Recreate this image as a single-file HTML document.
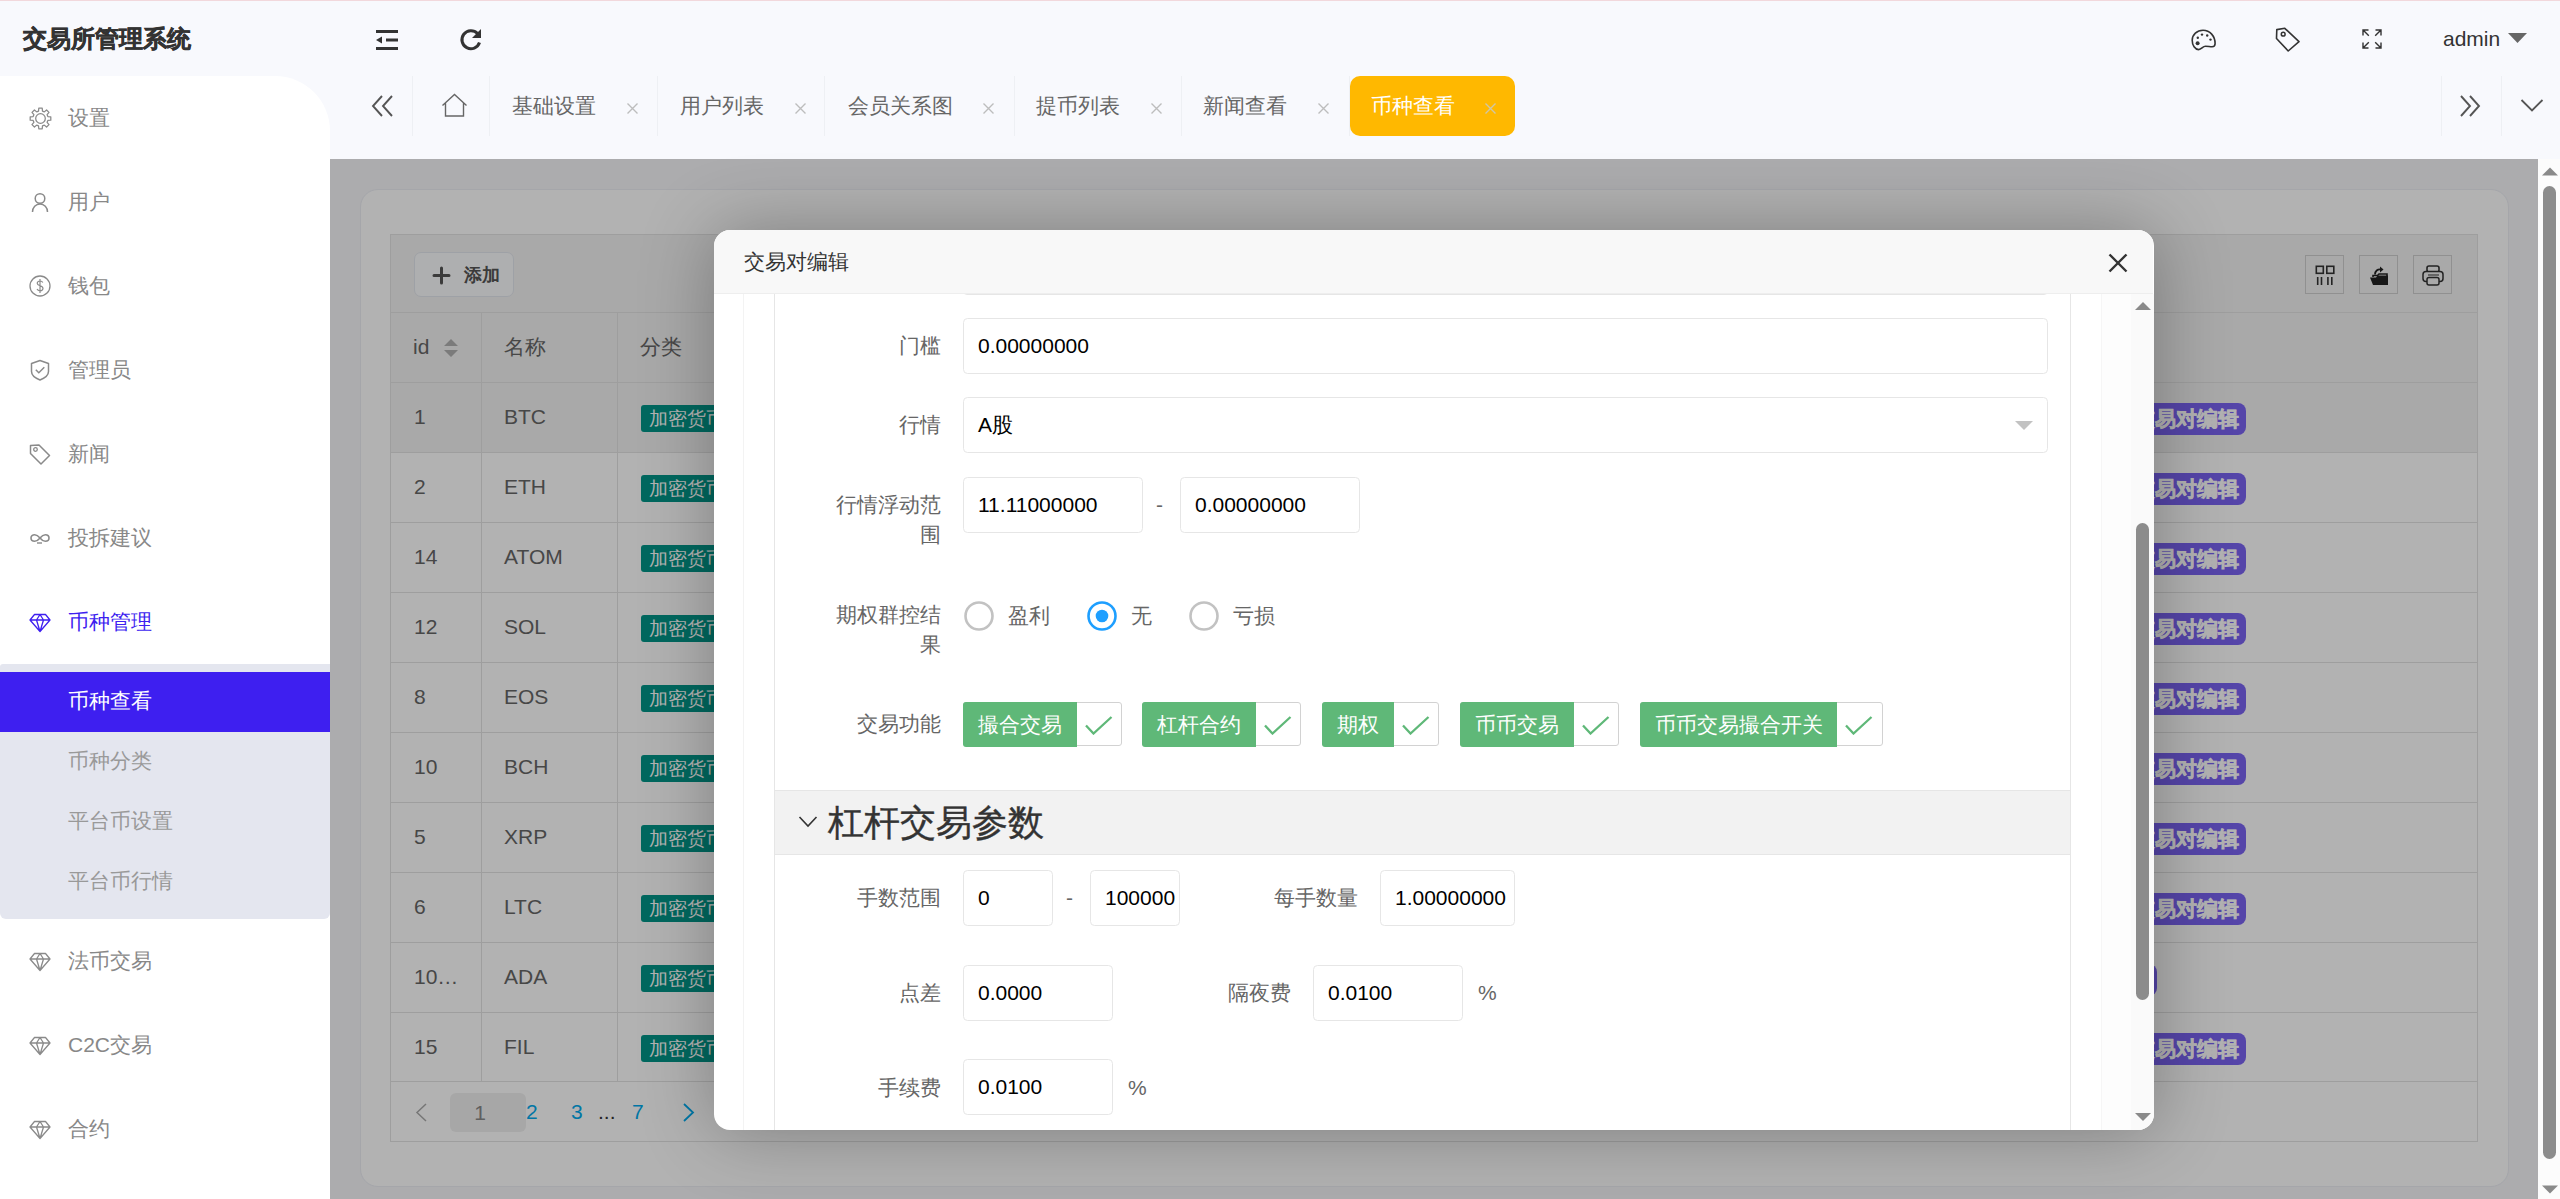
<!DOCTYPE html>
<html><head><meta charset="utf-8">
<style>
*{box-sizing:border-box;margin:0;padding:0}
html,body{width:2560px;height:1199px;overflow:hidden;white-space:nowrap;background:#fff;font-family:"Liberation Sans",sans-serif;color:#333}
.abs{position:absolute}
#topline{left:0;top:0;width:2560px;height:1px;background:#f2d8dc}
#header{left:0;top:1px;width:2560px;height:158px;background:#f8f9fd}
#logo{left:23px;top:22px;font-size:24px;font-weight:bold;color:#333;letter-spacing:0px;line-height:34px;-webkit-text-stroke:0.5px #333}
#side{left:0;top:76px;width:330px;height:1123px;background:#fff;border-top-right-radius:55px}
.mi{position:absolute;left:0;width:330px;height:30px;font-size:21px;line-height:30px;color:#888}
.mi .ic{position:absolute;left:29px;top:4px;width:22px;height:22px}
.mi .tx{position:absolute;left:68px;top:0}
#sub{left:0;top:664px;width:330px;height:255px;background:#e4e6ef;border-radius:3px 0 6px 6px}
#subact{left:0;top:672px;width:330px;height:60px;background:#3e1ff0}
.si{position:absolute;left:68px;font-size:21px;line-height:30px;color:#999}
#tabs{left:330px;top:76px;width:2230px;height:82px}
.tab{position:absolute;top:0;height:60px;font-size:21px;line-height:60px;color:#666}
.tsep{position:absolute;top:0;width:1px;height:60px;background:#eef0f4}
.tx-x{position:absolute;top:0;font-size:22px;color:#c2c2c2}
#content{left:330px;top:159px;width:2208px;height:1040px;background:#f6f6f9;overflow:hidden}
#card{left:30px;top:30px;width:2149px;height:998px;background:#fff;border-radius:18px;border:1px solid #eceef4}
#mask{left:330px;top:159px;width:2208px;height:1040px;background:rgba(0,0,0,0.3)}
#vscroll{left:2538px;top:159px;width:22px;height:1040px;background:#fcfcfc}
#modal{left:714px;top:230px;width:1440px;height:900px;background:#fff;border-radius:16px;overflow:hidden;box-shadow:1px 1px 75px rgba(0,0,0,0.3)}
#mhead{left:0;top:0;width:1439px;height:64px;background:#f8f8f8;border-bottom:1px solid #eee}
#mtitle{left:30px;top:17px;font-size:21px;line-height:30px;color:#333}
.lbl{position:absolute;font-size:21px;line-height:30px;color:#666;text-align:right}
.inp{position:absolute;height:56px;border:1px solid #e6e6e6;border-radius:4.5px;background:#fff;font-size:21px;line-height:54px;padding-left:14px;color:#000}
</style></head><body>
<div id="topline" class="abs"></div>
<div id="header" class="abs"></div>
<div id="logo" class="abs">交易所管理系统</div>

<!-- header icons -->
<svg class="abs" style="left:374px;top:28px" width="26" height="24" viewBox="0 0 26 24">
 <rect x="2" y="2" width="22" height="3" fill="#333"/>
 <rect x="12" y="10.5" width="12" height="3" fill="#333"/>
 <rect x="2" y="19" width="22" height="3" fill="#333"/>
 <path d="M2 12 L8 8.5 L8 15.5 Z" fill="#333"/>
</svg>
<svg class="abs" style="left:458px;top:27px" width="26" height="26" viewBox="0 0 26 26">
 <path d="M21.5 15.5 A9 9 0 1 1 19.5 6.5" fill="none" stroke="#333" stroke-width="3"/>
 <path d="M23 2 L23 11 L14 11 Z" fill="#333"/>
</svg>

<div id="side" class="abs"></div>
<div id="sub" class="abs"></div>
<div id="subact" class="abs"></div>


<div class="abs" style="left:0;top:0">
 <!-- 设置 -->
 <div class="mi" style="top:103px"><svg class="ic" style="left:29px;top:4px;width:23px;height:23px" viewBox="0 0 22 22"><path d="M9.11 3.95L9.35 1.14L12.65 1.14L12.89 3.95L14.65 4.68L16.81 2.86L19.14 5.19L17.32 7.35L18.05 9.11L20.86 9.35L20.86 12.65L18.05 12.89L17.32 14.65L19.14 16.81L16.81 19.14L14.65 17.32L12.89 18.05L12.65 20.86L9.35 20.86L9.11 18.05L7.35 17.32L5.19 19.14L2.86 16.81L4.68 14.65L3.95 12.89L1.14 12.65L1.14 9.35L3.95 9.11L4.68 7.35L2.86 5.19L5.19 2.86L7.35 4.68Z" fill="none" stroke="#8a8a8a" stroke-width="1.2" stroke-linejoin="round"/><circle cx="11" cy="11" r="4.6" fill="none" stroke="#8a8a8a" stroke-width="1.2"/></svg><span class="tx">设置</span></div>
 <div class="mi" style="top:187px"><svg class="ic" viewBox="0 0 22 22"><circle cx="11" cy="7.5" r="4.8" fill="none" stroke="#8a8a8a" stroke-width="1.5"/><path d="M3.5 21c0-4.5 3.3-8 7.5-8s7.5 3.5 7.5 8" fill="none" stroke="#8a8a8a" stroke-width="1.5"/></svg><span class="tx">用户</span></div>
 <div class="mi" style="top:271px"><svg class="ic" viewBox="0 0 22 22"><circle cx="11" cy="11" r="10" fill="none" stroke="#8a8a8a" stroke-width="1.3"/><path d="M13.8 7.6c-.5-1-1.6-1.6-2.8-1.6-1.6 0-2.8.9-2.8 2.3 0 3 5.8 1.8 5.8 5 0 1.4-1.3 2.5-3 2.5-1.3 0-2.5-.7-3-1.8M11 4v14" fill="none" stroke="#8a8a8a" stroke-width="1.2"/></svg><span class="tx">钱包</span></div>
 <div class="mi" style="top:355px"><svg class="ic" viewBox="0 0 22 22"><path d="M11 1.5l8.5 3v8c0 3.5-3.5 6.5-8.5 8.5-5-2-8.5-5-8.5-8.5v-8z" fill="none" stroke="#8a8a8a" stroke-width="1.5" stroke-linejoin="round"/><path d="M6.8 10.8l3 3 5.5-5.5" fill="none" stroke="#8a8a8a" stroke-width="1.5"/></svg><span class="tx">管理员</span></div>
 <div class="mi" style="top:439px"><svg class="ic" viewBox="0 0 22 22"><path d="M1.5 2.5l8.5-.5 10.5 10.5-8.5 8.5L1.5 10.5z" fill="none" stroke="#8a8a8a" stroke-width="1.5" stroke-linejoin="round"/><circle cx="6.5" cy="6.5" r="1.8" fill="none" stroke="#8a8a8a" stroke-width="1.3"/></svg><span class="tx">新闻</span></div>
 <div class="mi" style="top:523px"><svg class="ic" viewBox="0 0 22 22"><path d="M11 11c-2-2.5-3.5-3.3-5.3-3.3C3.6 7.7 2 9.1 2 11s1.6 3.3 3.7 3.3c1.8 0 3.3-.8 5.3-3.3 2-2.5 3.5-3.3 5.3-3.3 2.1 0 3.7 1.4 3.7 3.3s-1.6 3.3-3.7 3.3c-1.8 0-3.3-.8-5.3-3.3z" fill="none" stroke="#8a8a8a" stroke-width="1.6"/><path d="M8 16h5" stroke="#8a8a8a" stroke-width="1.4"/></svg><span class="tx">投拆建议</span></div>
 <div class="mi" style="top:607px;color:#3e1ff0"><svg class="ic" viewBox="0 0 22 22"><path d="M5.5 3.5h11l4.5 5.5L11 20.5 1 9z M1 9h20 M7.5 9L11 20.5 14.5 9 M7.5 9L11 3.5 14.5 9" fill="none" stroke="#3e1ff0" stroke-width="1.3" stroke-linejoin="round"/></svg><span class="tx">币种管理</span></div>
 <div class="si" style="top:686px;color:#fff">币种查看</div>
 <div class="si" style="top:746px">币种分类</div>
 <div class="si" style="top:806px">平台币设置</div>
 <div class="si" style="top:866px">平台币行情</div>
 <div class="mi" style="top:946px"><svg class="ic" viewBox="0 0 22 22"><path d="M5.5 3.5h11l4.5 5.5L11 20.5 1 9z M1 9h20 M7.5 9L11 20.5 14.5 9 M7.5 9L11 3.5 14.5 9" fill="none" stroke="#8a8a8a" stroke-width="1.3" stroke-linejoin="round"/></svg><span class="tx">法币交易</span></div>
 <div class="mi" style="top:1030px"><svg class="ic" viewBox="0 0 22 22"><path d="M5.5 3.5h11l4.5 5.5L11 20.5 1 9z M1 9h20 M7.5 9L11 20.5 14.5 9 M7.5 9L11 3.5 14.5 9" fill="none" stroke="#8a8a8a" stroke-width="1.3" stroke-linejoin="round"/></svg><span class="tx">C2C交易</span></div>
 <div class="mi" style="top:1114px"><svg class="ic" viewBox="0 0 22 22"><path d="M5.5 3.5h11l4.5 5.5L11 20.5 1 9z M1 9h20 M7.5 9L11 20.5 14.5 9 M7.5 9L11 3.5 14.5 9" fill="none" stroke="#8a8a8a" stroke-width="1.3" stroke-linejoin="round"/></svg><span class="tx">合约</span></div>
</div>

<div class="abs" style="left:0;top:0">
 <div class="tsep" style="left:412px;top:76px"></div>
 <div class="tsep" style="left:489px;top:76px"></div>
 <div class="tsep" style="left:657px;top:76px"></div>
 <div class="tsep" style="left:824px;top:76px"></div>
 <div class="tsep" style="left:1014px;top:76px"></div>
 <div class="tsep" style="left:1181px;top:76px"></div>
 <div class="tsep" style="left:1349px;top:76px"></div>
 <div class="tsep" style="left:2441px;top:76px"></div>
 <div class="tsep" style="left:2501px;top:76px"></div>
 <svg class="abs" style="left:370px;top:94px" width="26" height="24" viewBox="0 0 26 24"><path d="M12 2 L3 12 L12 22 M22 2 L13 12 L22 22" fill="none" stroke="#555" stroke-width="1.9"/></svg>
 <svg class="abs" style="left:441px;top:93px" width="27" height="25" viewBox="0 0 27 25"><path d="M1.5 12.5 L13.5 1.5 L25.5 12.5 M4.5 10 V23 H22.5 V10" fill="none" stroke="#666" stroke-width="1.4"/></svg>
 <div class="tab" style="left:512px;top:76px">基础设置</div><svg class="abs" style="left:627px;top:103px" width="11" height="11" viewBox="0 0 11 11"><path d="M0.5 0.5L10.5 10.5M10.5 0.5L0.5 10.5" stroke="#bdbdbd" stroke-width="1.4"/></svg>
 <div class="tab" style="left:680px;top:76px">用户列表</div><svg class="abs" style="left:795px;top:103px" width="11" height="11" viewBox="0 0 11 11"><path d="M0.5 0.5L10.5 10.5M10.5 0.5L0.5 10.5" stroke="#bdbdbd" stroke-width="1.4"/></svg>
 <div class="tab" style="left:848px;top:76px">会员关系图</div><svg class="abs" style="left:983px;top:103px" width="11" height="11" viewBox="0 0 11 11"><path d="M0.5 0.5L10.5 10.5M10.5 0.5L0.5 10.5" stroke="#bdbdbd" stroke-width="1.4"/></svg>
 <div class="tab" style="left:1036px;top:76px">提币列表</div><svg class="abs" style="left:1151px;top:103px" width="11" height="11" viewBox="0 0 11 11"><path d="M0.5 0.5L10.5 10.5M10.5 0.5L0.5 10.5" stroke="#bdbdbd" stroke-width="1.4"/></svg>
 <div class="tab" style="left:1203px;top:76px">新闻查看</div><svg class="abs" style="left:1318px;top:103px" width="11" height="11" viewBox="0 0 11 11"><path d="M0.5 0.5L10.5 10.5M10.5 0.5L0.5 10.5" stroke="#bdbdbd" stroke-width="1.4"/></svg>
 <div class="abs" style="left:1350px;top:76px;width:165px;height:60px;background:#ffb800;border-radius:10px"></div>
 <div class="tab" style="left:1371px;top:76px;color:#fff">币种查看</div><svg class="abs" style="left:1485px;top:103px" width="11" height="11" viewBox="0 0 11 11"><path d="M0.5 0.5L10.5 10.5M10.5 0.5L0.5 10.5" stroke="#cfc6a8" stroke-width="1.4"/></svg>
 <svg class="abs" style="left:2459px;top:94px" width="25" height="24" viewBox="0 0 25 24"><path d="M2 2 L11 12 L2 22 M11 2 L20 12 L11 22" fill="none" stroke="#555" stroke-width="1.9"/></svg>
 <svg class="abs" style="left:2520px;top:98px" width="24" height="15" viewBox="0 0 24 15"><path d="M1.5 2 L12 12.5 L22.5 2" fill="none" stroke="#555" stroke-width="1.8"/></svg>
</div>
<!-- right header -->
<svg class="abs" style="left:2191px;top:29px" width="26" height="22" viewBox="0 0 26 22"><path d="M12 1.2C6 1.2 1.2 5.5 1.2 11.2c0 5 2.8 9.4 6.5 9.4 2.8 0 3.9-3.3 6.8-3.3 3.3 0 3.8.5 6.6.5 1.9 0 3-1.4 3-3.3C24.1 7.2 19 1.2 12 1.2z" fill="none" stroke="#333" stroke-width="1.6"/><circle cx="6.6" cy="14.3" r="2" fill="#333"/><circle cx="6.8" cy="8.8" r="1.2" fill="#333"/><circle cx="11" cy="5.6" r="1.2" fill="#333"/><circle cx="16.2" cy="6.5" r="1.2" fill="#333"/><circle cx="19.5" cy="10.6" r="1.2" fill="#333"/></svg>
<svg class="abs" style="left:2275px;top:27px" width="26" height="25" viewBox="0 0 26 25"><path d="M1.8 2.6 L9.8 1.3 L24 14.6 L13.2 24 L1.5 11.5 Z" fill="none" stroke="#333" stroke-width="1.6" stroke-linejoin="round"/><circle cx="8.2" cy="7.2" r="1.9" fill="none" stroke="#333" stroke-width="1.5"/></svg>
<svg class="abs" style="left:2362px;top:29px" width="20" height="20" viewBox="0 0 20 20"><path d="M1 6.5V1H6.5M1 1L6.8 6.8M13.5 1H19V6.5M19 1L13.2 6.8M1 13.5V19H6.5M1 19L6.8 13.2M19 13.5V19H13.5M19 19L13.2 13.2" fill="none" stroke="#333" stroke-width="1.4"/></svg>
<div class="abs" style="left:2443px;top:24px;font-size:21px;line-height:30px;color:#333">admin</div>
<svg class="abs" style="left:2508px;top:33px" width="19" height="11" viewBox="0 0 19 11"><path d="M0 0H19L9.5 10Z" fill="#666"/></svg>

<div id="content" class="abs">
 <div id="card" class="abs"></div>
<div class="abs" style="left:60px;top:75px;width:2088px;height:908px;border:1px solid #e2e2e2;background:#fff"></div>
<div class="abs" style="left:61px;top:76px;width:2086px;height:78px;background:#f2f2f2;border-bottom:1px solid #e2e2e2"></div>
<div class="abs" style="left:61px;top:154px;width:2086px;height:70px;background:#f2f2f2;border-bottom:1px solid #e2e2e2"></div>
<div class="abs" style="left:61px;top:224px;width:2086px;height:69px;background:#f2f2f2"></div>
<div class="abs" style="left:61px;top:293px;width:2086px;height:1px;background:#e2e2e2"></div>
<div class="abs" style="left:61px;top:363px;width:2086px;height:1px;background:#e2e2e2"></div>
<div class="abs" style="left:61px;top:433px;width:2086px;height:1px;background:#e2e2e2"></div>
<div class="abs" style="left:61px;top:503px;width:2086px;height:1px;background:#e2e2e2"></div>
<div class="abs" style="left:61px;top:573px;width:2086px;height:1px;background:#e2e2e2"></div>
<div class="abs" style="left:61px;top:643px;width:2086px;height:1px;background:#e2e2e2"></div>
<div class="abs" style="left:61px;top:713px;width:2086px;height:1px;background:#e2e2e2"></div>
<div class="abs" style="left:61px;top:783px;width:2086px;height:1px;background:#e2e2e2"></div>
<div class="abs" style="left:61px;top:853px;width:2086px;height:1px;background:#e2e2e2"></div>
<div class="abs" style="left:61px;top:922px;width:2086px;height:1px;background:#e2e2e2"></div>
<div class="abs" style="left:151px;top:153px;width:1px;height:770px;background:#e2e2e2"></div>
<div class="abs" style="left:287px;top:153px;width:1px;height:770px;background:#e2e2e2"></div>
<div class="abs" style="left:83px;top:173px;font-size:21px;line-height:30px;color:#666">id</div>
<svg class="abs" style="left:113px;top:179px" width="16" height="20" viewBox="0 0 16 20"><path d="M8 1L15 8H1Z M8 19L15 12H1Z" fill="#b0b0b0"/></svg>
<div class="abs" style="left:174px;top:173px;font-size:21px;line-height:30px;color:#666">名称</div>
<div class="abs" style="left:310px;top:173px;font-size:21px;line-height:30px;color:#666">分类</div>
<div class="abs" style="left:84px;top:243px;font-size:21px;line-height:30px;color:#666">1</div>
<div class="abs" style="left:174px;top:243px;font-size:21px;line-height:30px;color:#666">BTC</div>
<div class="abs" style="left:311px;top:246px;height:27px;padding:0 8px;background:#009688;color:#fff;border-radius:3px;font-size:19px;line-height:27px">加密货币</div>
<div class="abs" style="left:1780px;top:244px;width:136px;height:32px;background:#7a64f2;border-radius:8px;color:#fff;font-weight:bold;font-size:21px;line-height:32px;text-align:right;padding-right:7px;-webkit-text-stroke:0.5px #fff">交易对编辑</div>
<div class="abs" style="left:84px;top:313px;font-size:21px;line-height:30px;color:#666">2</div>
<div class="abs" style="left:174px;top:313px;font-size:21px;line-height:30px;color:#666">ETH</div>
<div class="abs" style="left:311px;top:316px;height:27px;padding:0 8px;background:#009688;color:#fff;border-radius:3px;font-size:19px;line-height:27px">加密货币</div>
<div class="abs" style="left:1780px;top:314px;width:136px;height:32px;background:#7a64f2;border-radius:8px;color:#fff;font-weight:bold;font-size:21px;line-height:32px;text-align:right;padding-right:7px;-webkit-text-stroke:0.5px #fff">交易对编辑</div>
<div class="abs" style="left:84px;top:383px;font-size:21px;line-height:30px;color:#666">14</div>
<div class="abs" style="left:174px;top:383px;font-size:21px;line-height:30px;color:#666">ATOM</div>
<div class="abs" style="left:311px;top:386px;height:27px;padding:0 8px;background:#009688;color:#fff;border-radius:3px;font-size:19px;line-height:27px">加密货币</div>
<div class="abs" style="left:1780px;top:384px;width:136px;height:32px;background:#7a64f2;border-radius:8px;color:#fff;font-weight:bold;font-size:21px;line-height:32px;text-align:right;padding-right:7px;-webkit-text-stroke:0.5px #fff">交易对编辑</div>
<div class="abs" style="left:84px;top:453px;font-size:21px;line-height:30px;color:#666">12</div>
<div class="abs" style="left:174px;top:453px;font-size:21px;line-height:30px;color:#666">SOL</div>
<div class="abs" style="left:311px;top:456px;height:27px;padding:0 8px;background:#009688;color:#fff;border-radius:3px;font-size:19px;line-height:27px">加密货币</div>
<div class="abs" style="left:1780px;top:454px;width:136px;height:32px;background:#7a64f2;border-radius:8px;color:#fff;font-weight:bold;font-size:21px;line-height:32px;text-align:right;padding-right:7px;-webkit-text-stroke:0.5px #fff">交易对编辑</div>
<div class="abs" style="left:84px;top:523px;font-size:21px;line-height:30px;color:#666">8</div>
<div class="abs" style="left:174px;top:523px;font-size:21px;line-height:30px;color:#666">EOS</div>
<div class="abs" style="left:311px;top:526px;height:27px;padding:0 8px;background:#009688;color:#fff;border-radius:3px;font-size:19px;line-height:27px">加密货币</div>
<div class="abs" style="left:1780px;top:524px;width:136px;height:32px;background:#7a64f2;border-radius:8px;color:#fff;font-weight:bold;font-size:21px;line-height:32px;text-align:right;padding-right:7px;-webkit-text-stroke:0.5px #fff">交易对编辑</div>
<div class="abs" style="left:84px;top:593px;font-size:21px;line-height:30px;color:#666">10</div>
<div class="abs" style="left:174px;top:593px;font-size:21px;line-height:30px;color:#666">BCH</div>
<div class="abs" style="left:311px;top:596px;height:27px;padding:0 8px;background:#009688;color:#fff;border-radius:3px;font-size:19px;line-height:27px">加密货币</div>
<div class="abs" style="left:1780px;top:594px;width:136px;height:32px;background:#7a64f2;border-radius:8px;color:#fff;font-weight:bold;font-size:21px;line-height:32px;text-align:right;padding-right:7px;-webkit-text-stroke:0.5px #fff">交易对编辑</div>
<div class="abs" style="left:84px;top:663px;font-size:21px;line-height:30px;color:#666">5</div>
<div class="abs" style="left:174px;top:663px;font-size:21px;line-height:30px;color:#666">XRP</div>
<div class="abs" style="left:311px;top:666px;height:27px;padding:0 8px;background:#009688;color:#fff;border-radius:3px;font-size:19px;line-height:27px">加密货币</div>
<div class="abs" style="left:1780px;top:664px;width:136px;height:32px;background:#7a64f2;border-radius:8px;color:#fff;font-weight:bold;font-size:21px;line-height:32px;text-align:right;padding-right:7px;-webkit-text-stroke:0.5px #fff">交易对编辑</div>
<div class="abs" style="left:84px;top:733px;font-size:21px;line-height:30px;color:#666">6</div>
<div class="abs" style="left:174px;top:733px;font-size:21px;line-height:30px;color:#666">LTC</div>
<div class="abs" style="left:311px;top:736px;height:27px;padding:0 8px;background:#009688;color:#fff;border-radius:3px;font-size:19px;line-height:27px">加密货币</div>
<div class="abs" style="left:1780px;top:734px;width:136px;height:32px;background:#7a64f2;border-radius:8px;color:#fff;font-weight:bold;font-size:21px;line-height:32px;text-align:right;padding-right:7px;-webkit-text-stroke:0.5px #fff">交易对编辑</div>
<div class="abs" style="left:84px;top:803px;font-size:21px;line-height:30px;color:#666">10…</div>
<div class="abs" style="left:174px;top:803px;font-size:21px;line-height:30px;color:#666">ADA</div>
<div class="abs" style="left:311px;top:806px;height:27px;padding:0 8px;background:#009688;color:#fff;border-radius:3px;font-size:19px;line-height:27px">加密货币</div>
<div class="abs" style="left:1790px;top:803px;width:37px;height:32px;background:#7a64f2;border-radius:8px;margin-top:2px"></div>
<div class="abs" style="left:84px;top:873px;font-size:21px;line-height:30px;color:#666">15</div>
<div class="abs" style="left:174px;top:873px;font-size:21px;line-height:30px;color:#666">FIL</div>
<div class="abs" style="left:311px;top:876px;height:27px;padding:0 8px;background:#009688;color:#fff;border-radius:3px;font-size:19px;line-height:27px">加密货币</div>
<div class="abs" style="left:1780px;top:874px;width:136px;height:32px;background:#7a64f2;border-radius:8px;color:#fff;font-weight:bold;font-size:21px;line-height:32px;text-align:right;padding-right:7px;-webkit-text-stroke:0.5px #fff">交易对编辑</div>
<div class="abs" style="left:84px;top:93px;width:100px;height:45px;background:#fafbfc;border:1px solid #e3e7ee;border-radius:7px"></div>
<svg class="abs" style="left:102px;top:107px" width="19" height="19" viewBox="0 0 19 19"><path d="M9.5 2V17M2 9.5H17" stroke="#555" stroke-width="3" stroke-linecap="round"/></svg>
<div class="abs" style="left:134px;top:101px;font-size:18px;font-weight:bold;line-height:30px;color:#555">添加</div>
<div class="abs" style="left:1975px;top:96px;width:39px;height:39px;border:1px solid #cfcfcf"></div>
<div class="abs" style="left:2029px;top:96px;width:39px;height:39px;border:1px solid #cfcfcf"></div>
<div class="abs" style="left:2083px;top:96px;width:39px;height:39px;border:1px solid #cfcfcf"></div>
<svg class="abs" style="left:1985px;top:106px" width="21" height="21" viewBox="0 0 21 21"><rect x="1.3" y="1.3" width="7" height="7" fill="none" stroke="#333" stroke-width="1.6"/><rect x="11.8" y="1.3" width="7" height="7" fill="none" stroke="#333" stroke-width="1.6"/><path d="M2.7 12V20M6.5 12V20M12.9 12V20M16.8 12V20" stroke="#333" stroke-width="1.6"/></svg>
<svg class="abs" style="left:2039px;top:106px" width="21" height="21" viewBox="0 0 21 21"><path d="M1 12.5h6l1.5-2H19v9.5H4z" fill="#222"/><path d="M4 12V10.5H8.5L10 9H18V12" fill="none" stroke="#222" stroke-width="1.6"/><path d="M6 9.5C6 6 8.5 4 12 4.5" fill="none" stroke="#222" stroke-width="1.8"/><path d="M11 1.5L14.5 4.5L11 7.5Z" fill="#222"/></svg>
<svg class="abs" style="left:2092px;top:106px" width="22" height="21" viewBox="0 0 22 21"><rect x="5" y="1" width="12" height="6" rx="2" fill="none" stroke="#333" stroke-width="1.6"/><rect x="1" y="6.5" width="20" height="10" rx="3" fill="#f2f2f2" stroke="#333" stroke-width="1.5"/><rect x="5" y="12.5" width="12" height="7.5" rx="2" fill="#f2f2f2" stroke="#333" stroke-width="1.5"/><path d="M6 10H17" stroke="#333" stroke-width="1"/></svg>
<svg class="abs" style="left:85px;top:944px" width="12" height="19" viewBox="0 0 12 19"><path d="M11 1L2 9.5L11 18" fill="none" stroke="#aaa" stroke-width="1.5"/></svg>
<div class="abs" style="left:120px;top:934px;width:76px;height:39px;background:#f0f0f0;border-radius:6px;text-align:center;padding-right:16px;font-size:21px;line-height:39px;color:#888">1</div>
<div class="abs" style="left:196px;top:938px;font-size:21px;line-height:30px;color:#01aaed">2</div>
<div class="abs" style="left:241px;top:938px;font-size:21px;line-height:30px;color:#01aaed">3</div>
<div class="abs" style="left:302px;top:938px;font-size:21px;line-height:30px;color:#01aaed">7</div>
<div class="abs" style="left:268px;top:938px;font-size:21px;line-height:30px;color:#333">...</div>
<svg class="abs" style="left:353px;top:944px" width="12" height="19" viewBox="0 0 12 19"><path d="M1 1L10 9.5L1 18" fill="none" stroke="#01aaed" stroke-width="1.8"/></svg>
</div>
<div id="mask" class="abs"></div>
<div id="vscroll" class="abs"></div>
<svg class="abs" style="left:2542px;top:167px" width="16" height="9" viewBox="0 0 16 9"><path d="M0 8.5H16L8 0.5Z" fill="#8a8a8a"/></svg>
<div class="abs" style="left:2543px;top:186px;width:13px;height:973px;background:#8c8c8c;border-radius:6.5px"></div>
<svg class="abs" style="left:2542px;top:1185px" width="16" height="9" viewBox="0 0 16 9"><path d="M0 0.5H16L8 8.5Z" fill="#8a8a8a"/></svg>

<div id="modal" class="abs">
<div class="abs" style="left:1387px;top:64px;width:30px;height:836px;background:#fdfdfd"></div>
<div class="abs" style="left:1417px;top:64px;width:23px;height:836px;background:#fafafa"></div>
<div class="abs" style="left:29px;top:64px;width:1px;height:836px;background:#f3f3f3"></div>
<div class="abs" style="left:60px;top:64px;width:1px;height:836px;background:#e6e6e6"></div>
<div class="abs" style="left:1356px;top:64px;width:1px;height:836px;background:#e6e6e6"></div>
<div class="abs" style="left:1387px;top:64px;width:1px;height:836px;background:#f6f6f6"></div>
<div class="abs" style="left:249px;top:8px;width:1085px;height:57px;border:1px solid #e6e6e6;border-radius:4px"></div>
<div class="lbl" style="right:1213px;top:101px">门槛</div>
<div class="inp" style="left:249px;top:88px;width:1085px;">0.00000000</div>
<div class="lbl" style="right:1213px;top:180px">行情</div>
<div class="inp" style="left:249px;top:167px;width:1085px;">A股</div>
<svg class="abs" style="left:1301px;top:191px" width="18" height="10" viewBox="0 0 18 10"><path d="M0 0H18L9 9Z" fill="#c2c2c2"/></svg>
<div class="lbl" style="right:1213px;top:260px;width:110px;white-space:normal;line-height:30px">行情浮动范围</div>
<div class="inp" style="left:249px;top:247px;width:180px;">11.11000000</div>
<div class="abs" style="left:442px;top:260px;font-size:21px;line-height:30px;color:#666">-</div>
<div class="inp" style="left:466px;top:247px;width:180px;">0.00000000</div>
<div class="lbl" style="right:1213px;top:370px;width:110px;white-space:normal;line-height:30px">期权群控结果</div>
<svg class="abs" style="left:250px;top:371px" width="30" height="30" viewBox="0 0 30 30"><circle cx="15" cy="15" r="13.5" fill="#fff" stroke="#c2c2c2" stroke-width="2.6"/></svg>
<div class="abs" style="left:294px;top:371px;font-size:21px;line-height:30px;color:#666">盈利</div>
<svg class="abs" style="left:373px;top:371px" width="30" height="30" viewBox="0 0 30 30"><circle cx="15" cy="15" r="13.5" fill="#fff" stroke="#1e9fff" stroke-width="2.6"/><circle cx="15" cy="15" r="6.3" fill="#1e9fff"/></svg>
<div class="abs" style="left:417px;top:371px;font-size:21px;line-height:30px;color:#666">无</div>
<svg class="abs" style="left:475px;top:371px" width="30" height="30" viewBox="0 0 30 30"><circle cx="15" cy="15" r="13.5" fill="#fff" stroke="#c2c2c2" stroke-width="2.6"/></svg>
<div class="abs" style="left:519px;top:371px;font-size:21px;line-height:30px;color:#666">亏损</div>
<div class="lbl" style="right:1213px;top:479px">交易功能</div>
<div class="abs" style="left:249px;top:472px;width:159px;height:44px;border:1px solid #d2d2d2;border-radius:3px;background:#fff"></div>
<div class="abs" style="left:249px;top:472px;width:114px;height:45px;background:#5fb878;border-radius:3px 0 0 3px;color:#fff;font-size:21px;line-height:45px;text-align:center">撮合交易</div>
<svg class="abs" style="left:371px;top:486px" width="28" height="19" viewBox="0 0 28 19"><path d="M1 9.5L8.5 17.5L26.5 1" fill="none" stroke="#5fb878" stroke-width="2.3"/></svg>
<div class="abs" style="left:428px;top:472px;width:159px;height:44px;border:1px solid #d2d2d2;border-radius:3px;background:#fff"></div>
<div class="abs" style="left:428px;top:472px;width:114px;height:45px;background:#5fb878;border-radius:3px 0 0 3px;color:#fff;font-size:21px;line-height:45px;text-align:center">杠杆合约</div>
<svg class="abs" style="left:550px;top:486px" width="28" height="19" viewBox="0 0 28 19"><path d="M1 9.5L8.5 17.5L26.5 1" fill="none" stroke="#5fb878" stroke-width="2.3"/></svg>
<div class="abs" style="left:608px;top:472px;width:117px;height:44px;border:1px solid #d2d2d2;border-radius:3px;background:#fff"></div>
<div class="abs" style="left:608px;top:472px;width:72px;height:45px;background:#5fb878;border-radius:3px 0 0 3px;color:#fff;font-size:21px;line-height:45px;text-align:center">期权</div>
<svg class="abs" style="left:688px;top:486px" width="28" height="19" viewBox="0 0 28 19"><path d="M1 9.5L8.5 17.5L26.5 1" fill="none" stroke="#5fb878" stroke-width="2.3"/></svg>
<div class="abs" style="left:746px;top:472px;width:159px;height:44px;border:1px solid #d2d2d2;border-radius:3px;background:#fff"></div>
<div class="abs" style="left:746px;top:472px;width:114px;height:45px;background:#5fb878;border-radius:3px 0 0 3px;color:#fff;font-size:21px;line-height:45px;text-align:center">币币交易</div>
<svg class="abs" style="left:868px;top:486px" width="28" height="19" viewBox="0 0 28 19"><path d="M1 9.5L8.5 17.5L26.5 1" fill="none" stroke="#5fb878" stroke-width="2.3"/></svg>
<div class="abs" style="left:926px;top:472px;width:243px;height:44px;border:1px solid #d2d2d2;border-radius:3px;background:#fff"></div>
<div class="abs" style="left:926px;top:472px;width:197px;height:45px;background:#5fb878;border-radius:3px 0 0 3px;color:#fff;font-size:21px;line-height:45px;text-align:center">币币交易撮合开关</div>
<svg class="abs" style="left:1131px;top:486px" width="28" height="19" viewBox="0 0 28 19"><path d="M1 9.5L8.5 17.5L26.5 1" fill="none" stroke="#5fb878" stroke-width="2.3"/></svg>
<div class="abs" style="left:61px;top:560px;width:1295px;height:65px;background:#f2f2f2;border-top:1px solid #e6e6e6;border-bottom:1px solid #e6e6e6"></div>
<svg class="abs" style="left:84px;top:585px" width="20" height="14" viewBox="0 0 20 14"><path d="M1.5 2L10 11L18.5 2" fill="none" stroke="#333" stroke-width="1.6"/></svg>
<div class="abs" style="left:114px;top:570px;font-size:36px;line-height:45px;color:#333;-webkit-text-stroke:0.4px #333">杠杆交易参数</div>
<div class="lbl" style="right:1213px;top:653px">手数范围</div>
<div class="inp" style="left:249px;top:640px;width:90px;">0</div>
<div class="abs" style="left:352px;top:653px;font-size:21px;line-height:30px;color:#666">-</div>
<div class="inp" style="left:376px;top:640px;width:90px;">100000</div>
<div class="lbl" style="right:796px;top:653px">每手数量</div>
<div class="inp" style="left:666px;top:640px;width:135px;">1.00000000</div>
<div class="lbl" style="right:1213px;top:748px">点差</div>
<div class="inp" style="left:249px;top:735px;width:150px;">0.0000</div>
<div class="lbl" style="right:863px;top:748px">隔夜费</div>
<div class="inp" style="left:599px;top:735px;width:150px;">0.0100</div>
<div class="abs" style="left:764px;top:748px;font-size:21px;line-height:30px;color:#666">%</div>
<div class="lbl" style="right:1213px;top:843px">手续费</div>
<div class="inp" style="left:249px;top:829px;width:150px;">0.0100</div>
<div class="abs" style="left:414px;top:843px;font-size:21px;line-height:30px;color:#666">%</div>
<svg class="abs" style="left:1421px;top:71px" width="16" height="10" viewBox="0 0 16 10"><path d="M0 9H16L8 1Z" fill="#8a8a8a"/></svg>
<svg class="abs" style="left:1421px;top:882px" width="16" height="10" viewBox="0 0 16 10"><path d="M0 1H16L8 9Z" fill="#8a8a8a"/></svg>
<div class="abs" style="left:1422px;top:293px;width:13px;height:477px;background:#8c8c8c;border-radius:6.5px"></div>
 <div id="mhead" class="abs"></div>
 <div id="mtitle" class="abs">交易对编辑</div>
 <svg class="abs" style="left:1394px;top:23px" width="20" height="20" viewBox="0 0 20 20"><path d="M1.5 1.5L18.5 18.5M18.5 1.5L1.5 18.5" stroke="#333" stroke-width="2.4"/></svg>
</div>
</body></html>
